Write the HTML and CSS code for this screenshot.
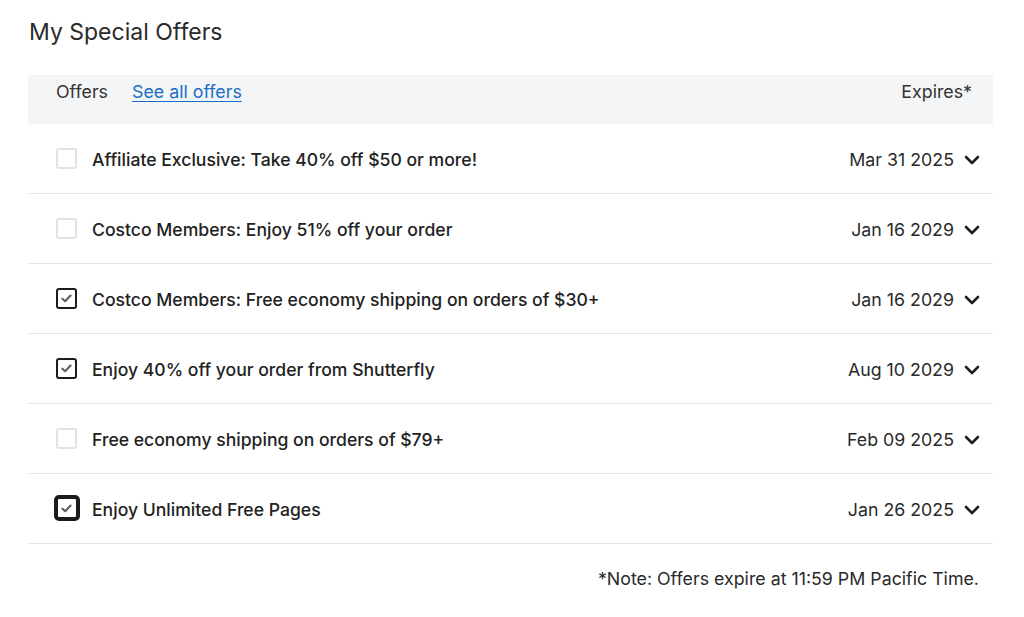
FILE: index.html
```html
<!DOCTYPE html>
<html>
<head>
<meta charset="utf-8">
<link rel="stylesheet" href="styles.css">
</head>
<body>
<div class="page">
  <h1 class="title">My Special Offers</h1>
  <div class="table">
    <div class="thead">
      <div class="thead-left"><span class="th">Offers</span><a class="link" href="#">See all offers</a></div>
      <span class="th">Expires*</span>
    </div>
    <div class="row">
      <span class="cb"></span>
      <span class="name">Affiliate Exclusive: Take 40% off $50 or more!</span>
      <span class="date">Mar 31 2025</span>
      <svg class="chev" viewBox="0 0 16 10" width="16" height="10"><path d="M2 2 L8 8 L14 2" fill="none" stroke="#1f1f1f" stroke-width="2.6" stroke-linecap="round" stroke-linejoin="round"/></svg>
    </div>
    <div class="row">
      <span class="cb"></span>
      <span class="name">Costco Members: Enjoy 51% off your order</span>
      <span class="date">Jan 16 2029</span>
      <svg class="chev" viewBox="0 0 16 10" width="16" height="10"><path d="M2 2 L8 8 L14 2" fill="none" stroke="#1f1f1f" stroke-width="2.6" stroke-linecap="round" stroke-linejoin="round"/></svg>
    </div>
    <div class="row">
      <span class="cb checked"><svg viewBox="0 0 12 10" width="11" height="9"><path d="M1.5 5.2 L4.5 8 L10.5 1.8" fill="none" stroke="#606060" stroke-width="2.4" stroke-linecap="round" stroke-linejoin="round"/></svg></span>
      <span class="name">Costco Members: Free economy shipping on orders of $30+</span>
      <span class="date">Jan 16 2029</span>
      <svg class="chev" viewBox="0 0 16 10" width="16" height="10"><path d="M2 2 L8 8 L14 2" fill="none" stroke="#1f1f1f" stroke-width="2.6" stroke-linecap="round" stroke-linejoin="round"/></svg>
    </div>
    <div class="row">
      <span class="cb checked"><svg viewBox="0 0 12 10" width="11" height="9"><path d="M1.5 5.2 L4.5 8 L10.5 1.8" fill="none" stroke="#606060" stroke-width="2.4" stroke-linecap="round" stroke-linejoin="round"/></svg></span>
      <span class="name">Enjoy 40% off your order from Shutterfly</span>
      <span class="date">Aug 10 2029</span>
      <svg class="chev" viewBox="0 0 16 10" width="16" height="10"><path d="M2 2 L8 8 L14 2" fill="none" stroke="#1f1f1f" stroke-width="2.6" stroke-linecap="round" stroke-linejoin="round"/></svg>
    </div>
    <div class="row">
      <span class="cb"></span>
      <span class="name">Free economy shipping on orders of $79+</span>
      <span class="date">Feb 09 2025</span>
      <svg class="chev" viewBox="0 0 16 10" width="16" height="10"><path d="M2 2 L8 8 L14 2" fill="none" stroke="#1f1f1f" stroke-width="2.6" stroke-linecap="round" stroke-linejoin="round"/></svg>
    </div>
    <div class="row">
      <span class="cb checked focused"><svg viewBox="0 0 12 10" width="11" height="9"><path d="M1.5 5.2 L4.5 8 L10.5 1.8" fill="none" stroke="#606060" stroke-width="2.4" stroke-linecap="round" stroke-linejoin="round"/></svg></span>
      <span class="name">Enjoy Unlimited Free Pages</span>
      <span class="date">Jan 26 2025</span>
      <svg class="chev" viewBox="0 0 16 10" width="16" height="10"><path d="M2 2 L8 8 L14 2" fill="none" stroke="#1f1f1f" stroke-width="2.6" stroke-linecap="round" stroke-linejoin="round"/></svg>
    </div>
  </div>
  <p class="note">*Note: Offers expire at 11:59 PM Pacific Time.</p>
</div>
</body>
</html>
```

FILE: styles.css
```css
* { box-sizing: border-box; }
html, body { margin: 0; padding: 0; background: #fff; }
body {
  font-family: Inter, "Noto Sans", sans-serif;
  color: #222;
}
.page {
  padding: 16px 31px 0 28px;
}
.title {
  margin: 0 0 0 1px;
  font-size: 23px;
  font-weight: 400;
  line-height: 32px;
  color: #2a2a2a;
}
.table {
  margin-top: 27px;
}
.thead {
  height: 49px;
  background: #f4f5f7;
  display: flex;
  justify-content: space-between;
  align-items: flex-start;
  padding: 1px 21px 0 28px;
}
.thead-left {
  display: flex;
  gap: 24px;
}
.th {
  font-size: 17.8px;
  line-height: 32px;
  color: #333;
}
.link {
  font-size: 17.8px;
  line-height: 32px;
  color: #1a6fc4;
  text-decoration: underline;
  text-underline-offset: 3px;
}
.row {
  height: 70px;
  border-bottom: 1px solid #e4e4e4;
  display: flex;
  align-items: center;
  padding: 2px 13px 0 28px;
}
.cb {
  width: 21px;
  height: 21px;
  border: 2px solid #e2e2e2;
  border-radius: 3px;
  flex: none;
  display: flex;
  align-items: center;
  justify-content: center;
  margin-top: -3px;
}
.cb.checked {
  border-color: #1c1c1c;
  border-width: 2.5px;
}
.cb.focused {
  width: 26px;
  height: 26px;
  border-width: 4.5px;
  margin-left: -2.5px;
  margin-right: -2.5px;
  border-radius: 5px;
}
.name {
  margin-left: 15px;
  font-size: 17.6px;
  font-weight: 500;
  color: #222;
  flex: 1;
}
.date {
  font-size: 17.8px;
  color: #2a2a2a;
}
.chev {
  margin-left: 10px;
  flex: none;
}
.note {
  margin: 24px 14px 0 0;
  text-align: right;
  font-size: 17.8px;
  color: #2a2a2a;
}
```
